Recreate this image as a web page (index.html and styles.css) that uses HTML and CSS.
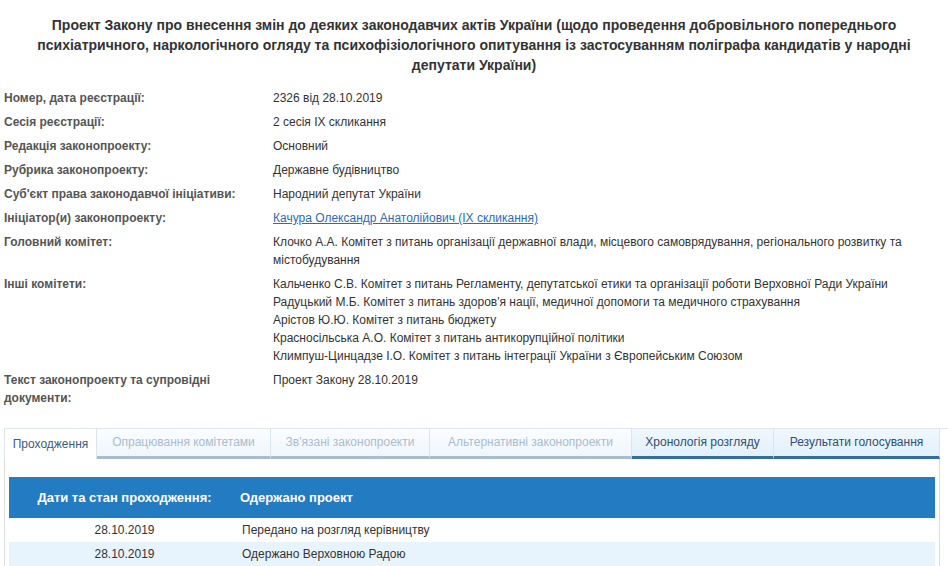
FILE: index.html
```html
<!DOCTYPE html>
<html lang="uk">
<head>
<meta charset="utf-8">
<title>Законопроект 2326</title>
<link rel="stylesheet" href="styles.css">
</head>
<body>
<div class="page">
  <h1 class="title">Проект Закону про внесення змін до деяких законодавчих актів України (щодо проведення добровільного попереднього психіатричного, наркологічного огляду та психофізіологічного опитування із застосуванням поліграфа кандидатів у народні депутати України)</h1>

  <div class="info">
    <div class="label">Номер, дата реєстрації:</div>
    <div class="value">2326 від 28.10.2019</div>
    <div class="label">Сесія реєстрації:</div>
    <div class="value">2 сесія IX скликання</div>
    <div class="label">Редакція законопроекту:</div>
    <div class="value">Основний</div>
    <div class="label">Рубрика законопроекту:</div>
    <div class="value">Державне будівництво</div>
    <div class="label">Суб'єкт права законодавчої ініціативи:</div>
    <div class="value">Народний депутат України</div>
    <div class="label">Ініціатор(и) законопроекту:</div>
    <div class="value"><a class="link" href="#">Качура Олександр Анатолійович (IX скликання)</a></div>
    <div class="label">Головний комітет:</div>
    <div class="value">Клочко А.А. Комітет з питань організації державної влади, місцевого самоврядування, регіонального розвитку та містобудування</div>
    <div class="label">Інші комітети:</div>
    <div class="value">
      <div>Кальченко С.В. Комітет з питань Регламенту, депутатської етики та організації роботи Верховної Ради України</div>
      <div>Радуцький М.Б. Комітет з питань здоров'я нації, медичної допомоги та медичного страхування</div>
      <div>Арістов Ю.Ю. Комітет з питань бюджету</div>
      <div>Красносільська А.О. Комітет з питань антикорупційної політики</div>
      <div>Климпуш-Цинцадзе І.О. Комітет з питань інтеграції України з Європейським Союзом</div>
    </div>
    <div class="label">Текст законопроекту та супровідні документи:</div>
    <div class="value">Проект Закону 28.10.2019</div>
  </div>

  <div class="tabs">
    <div class="tab active">Проходження</div>
    <div class="tab disabled">Опрацювання комітетами</div>
    <div class="tab disabled">Зв'язані законопроекти</div>
    <div class="tab disabled">Альтернативні законопроекти</div>
    <div class="tab blue">Хронологія розгляду</div>
    <div class="tab blue">Результати голосування</div>
  </div>
  <div class="panel">
    <div class="stages">
      <div class="head">
        <div class="c1">Дати та стан проходження:</div>
        <div class="c2">Одержано проект</div>
      </div>
      <div class="row">
        <div class="c1">28.10.2019</div>
        <div class="c2">Передано на розгляд керівництву</div>
      </div>
      <div class="row alt">
        <div class="c1">28.10.2019</div>
        <div class="c2">Одержано Верховною Радою</div>
      </div>
    </div>
  </div>
</div>
</body>
</html>
```

FILE: styles.css
```css
* { box-sizing: border-box; }
html, body { margin: 0; padding: 0; background: #fff; }
body {
  font-family: "Liberation Sans", Arial, sans-serif;
  font-size: 12px;
  color: #333;
  width: 948px;
  height: 566px;
  overflow: hidden;
}
.page { padding: 15px 0 0 0; }
.title {
  margin: 0 20px 11px 20px;
  font-size: 14px;
  line-height: 20px;
  font-weight: bold;
  text-align: center;
  color: #333;
}
.info {
  display: grid;
  grid-template-columns: 273px 1fr;
}
.label {
  padding: 3px 19px 3px 4px;
  line-height: 18px;
  font-weight: bold;
  color: #555;
}
.value {
  padding: 3px 8px 3px 0;
  line-height: 18px;
  color: #333;
}
.link { color: #2b6cb6; text-decoration: underline; }

.tabs {
  margin: 18px 0 0 4px;
  display: grid;
  grid-template-columns: 93px 174px 159px 202px 142px 166px;
  height: 31px;
  border-top: 1px solid #dfe5ea;
}
.tab {
  display: flex;
  align-items: center;
  justify-content: center;
  font-size: 12px;
  border-right: 1px solid #dde5ec;
  padding-bottom: 1px;
}
.tab.active {
  background: #fff;
  color: #3b5d82;
  border-left: 1px solid #dfe5ea;
  border-right: 1px solid #dde5ec;
}
.tab.disabled {
  color: #a9bdd0;
  background: linear-gradient(#fbfdff, #eff6fc);
  border-bottom: 3px solid #a8bccd;
}
.tab.blue {
  color: #2f4f72;
  background: linear-gradient(#f0f7fe, #e2f0fc);
  border-bottom: 3px solid #356e98;
}
.panel {
  margin: 0 8px 0 4px;
  height: 108px;
  border: 1px solid #dcdcdc;
  border-top: none;
  padding: 18px 4px 0 4px;
}
.stages { width: 926px; }
.head {
  display: flex;
  background: #237bc1;
  color: #fff;
  height: 41px;
  align-items: center;
  font-size: 13px;
  font-weight: bold;
}
.row {
  display: flex;
  height: 24px;
  align-items: center;
}
.row.alt { background: #e8f4fd; }
.c1 { width: 231px; text-align: center; }
.c2 { padding-left: 2px; }
.head .c2 { padding-left: 0; }
```
